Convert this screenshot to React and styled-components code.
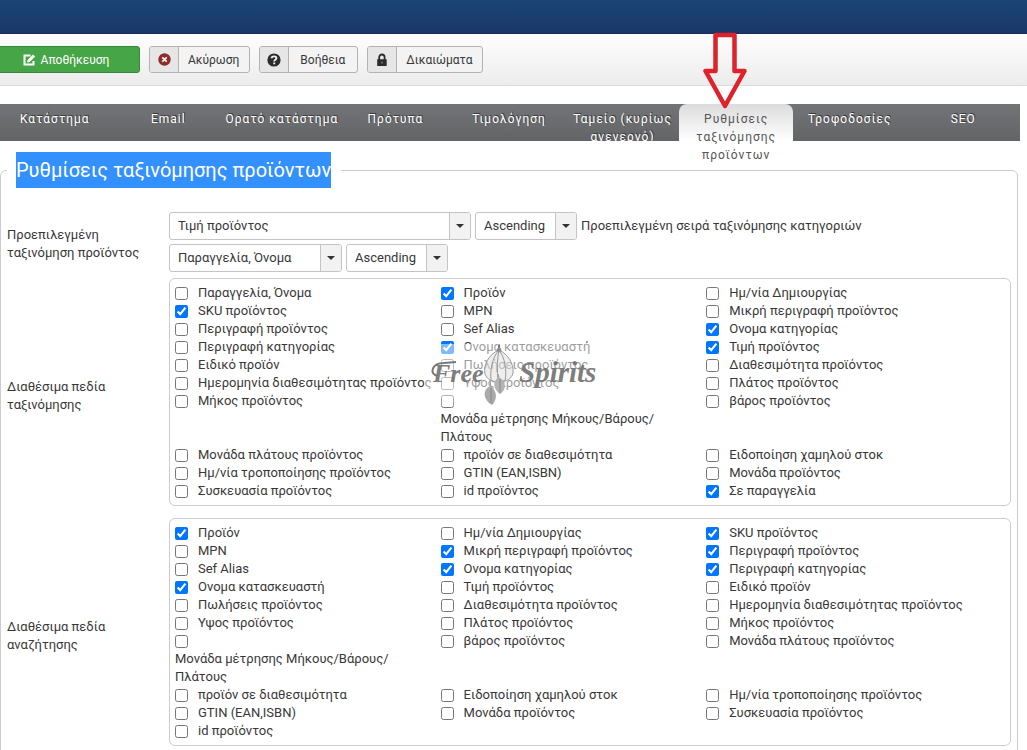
import React from 'react'
import styled, { createGlobalStyle, css } from 'styled-components'

const GlobalStyle = createGlobalStyle`
  * {
    box-sizing: border-box;
  }

  body {
    margin: 0;
    background: #fff;
    color: #383838;
    font: 13px/18px Roboto, "Noto Sans", sans-serif;
    overflow-x: hidden;
  }

  button, select, input {
    font: inherit;
    color: inherit;
  }
`

const Header = styled.header`
  height: 34px;
  background: linear-gradient(180deg, #1a4576 0%, #1a3867 95%, #142c53 100%);
`

const Toolbar = styled.div`
  display: flex;
  gap: 9px;
  padding: 12px 0;
  background: linear-gradient(180deg, #fefefe 0%, #ececec 100%);
  border-bottom: 1px solid #dcdcdc;
  font-size: 12px;
`

const SaveButton = styled.button`
  display: flex;
  align-items: center;
  justify-content: center;
  gap: 5px;
  width: 148px;
  height: 27px;
  margin-left: -8px;
  padding: 0;
  border: 1px solid #37873a;
  border-radius: 3px;
  background: #46a546;
  color: #fff;
`

const ToolButton = styled.button`
  display: flex;
  height: 27px;
  padding: 0;
  overflow: hidden;
  border: 1px solid #b3b3b3;
  border-radius: 3px;
  background: #f3f3f3;
  line-height: 26px;
`

const ToolIcon = styled.span`
  display: flex;
  align-items: center;
  justify-content: center;
  width: 29px;
  height: 25px;
  border-right: 1px solid #b3b3b3;
  background: #e6e6e6;
`

const ToolLabel = styled.span`
  min-width: 68px;
  padding: 0 10px 0 9px;
  text-align: center;
`

const TabBar = styled.nav`
  display: flex;
  height: 37px;
  margin: 18px 7px 0 -2px;
  background: linear-gradient(180deg, #737477 0%, #636466 100%);
  font-size: 12px;
`

const Tab = styled.a`
  position: relative;
  flex: 1 1 0;
  min-width: 0;
  height: 37px;
  padding-top: 6px;
  overflow: hidden;
  color: #fff;
  letter-spacing: 1px;
  text-align: center;
  text-decoration: none;
  text-shadow: 1px -1px 0 #3c3c3c;

  ${({ $active }) => $active && css`
    height: 62px;
    overflow: visible;
    border-radius: 8px 8px 0 0;
    background: linear-gradient(180deg, #dddcdd 0%, #fff 37px);
    color: #555;
    text-shadow: none;
  `}
`

const Pointer = styled.svg`
  position: absolute;
  top: -72px;
  left: 24px;
`

const Panel = styled.fieldset`
  min-width: 0;
  margin: 11px 9px 0 0;
  padding: 24px 6px 10px;
  border: 1px solid #ccc;
  border-radius: 6px;
`

const Legend = styled.legend`
  padding: 0 10px 0 9px;
  font-size: 20px;
  line-height: 36px;
`

const Selection = styled.mark`
  display: block;
  background: #3390ff;
  color: #fff;
`

const Row = styled.div`
  display: grid;
  grid-template-columns: 162px minmax(0, 1fr);
  align-items: center;
`

const RowTitle = styled.div`
  padding-right: 20px;
`

const Sorting = styled.div`
  display: flex;
  flex-direction: column;
  gap: 4px;
  padding-bottom: 4px;
`

const SortLine = styled.div`
  display: flex;
  align-items: center;
  gap: 4px;
`

const SelectBox = styled.div`
  position: relative;
  width: ${({ $width }) => $width}px;
`

const Select = styled.select`
  display: block;
  width: 100%;
  height: 28px;
  padding: 0 28px 0 8px;
  appearance: none;
  border: 1px solid #c4c4c4;
  border-radius: 3px;
  background: #fff;
`

const SelectArrow = styled.span`
  position: absolute;
  top: 1px;
  right: 1px;
  bottom: 1px;
  display: flex;
  align-items: center;
  justify-content: center;
  width: 21px;
  border-left: 1px solid #c4c4c4;
  border-radius: 0 2px 2px 0;
  background: #f2f2f2;
  pointer-events: none;
`

const Group = styled.div`
  position: relative;
  display: grid;
  grid-template-columns: repeat(3, 32%);
  margin: 2px 0 10px;
  padding: 5px;
  border: 1px solid #ccc;
  border-radius: 6px;
`

const Option = styled.label`
  display: flex;
  flex-direction: ${({ $stacked }) => ($stacked ? 'column' : 'row')};
  column-gap: 10px;
  white-space: ${({ $stacked }) => ($stacked ? 'normal' : 'nowrap')};
`

const Checkbox = styled.input`
  flex: none;
  width: 13px;
  height: 13px;
  margin: 3px 0 2px;
`

const OptionText = styled.span`
  max-width: ${({ $stacked }) => ($stacked ? '230px' : 'none')};
`

const Watermark = styled.div`
  position: absolute;
  top: 65px;
  left: 254px;
  width: 178px;
  height: 62px;
  background: linear-gradient(180deg, rgba(255, 255, 255, 0.5) 48px, rgba(255, 255, 255, 0.2) 100%);
  pointer-events: none;
`

const tabs = [
  'Κατάστημα',
  'Email',
  'Ορατό κατάστημα',
  'Πρότυπα',
  'Τιμολόγηση',
  'Ταμείο (κυρίως ανενεργό)',
  'Ρυθμίσεις ταξινόμησης προϊόντων',
  'Τροφοδοσίες',
  'SEO',
]

const units = 'Μονάδα μέτρησης Μήκους/Βάρους/Πλάτους'

const sortFields = [
  ['Παραγγελία, Όνομα'],
  ['Προϊόν', true],
  ['Ημ/νία Δημιουργίας'],
  ['SKU προϊόντος', true],
  ['MPN'],
  ['Μικρή περιγραφή προϊόντος'],
  ['Περιγραφή προϊόντος'],
  ['Sef Alias'],
  ['Ονομα κατηγορίας', true],
  ['Περιγραφή κατηγορίας'],
  ['Ονομα κατασκευαστή', true],
  ['Τιμή προϊόντος', true],
  ['Ειδικό προϊόν'],
  ['Πωλήσεις προϊόντος'],
  ['Διαθεσιμότητα προϊόντος'],
  ['Ημερομηνία διαθεσιμότητας προϊόντος'],
  ['Υψος προϊόντος'],
  ['Πλάτος προϊόντος'],
  ['Μήκος προϊόντος'],
  [units],
  ['βάρος προϊόντος'],
  ['Μονάδα πλάτους προϊόντος'],
  ['προϊόν σε διαθεσιμότητα'],
  ['Ειδοποίηση χαμηλού στοκ'],
  ['Ημ/νία τροποποίησης προϊόντος'],
  ['GTIN (EAN,ISBN)'],
  ['Μονάδα προϊόντος'],
  ['Συσκευασία προϊόντος'],
  ['id προϊόντος'],
  ['Σε παραγγελία', true],
]

const searchFields = [
  ['Προϊόν', true],
  ['Ημ/νία Δημιουργίας'],
  ['SKU προϊόντος', true],
  ['MPN'],
  ['Μικρή περιγραφή προϊόντος', true],
  ['Περιγραφή προϊόντος', true],
  ['Sef Alias'],
  ['Ονομα κατηγορίας', true],
  ['Περιγραφή κατηγορίας', true],
  ['Ονομα κατασκευαστή', true],
  ['Τιμή προϊόντος'],
  ['Ειδικό προϊόν'],
  ['Πωλήσεις προϊόντος'],
  ['Διαθεσιμότητα προϊόντος'],
  ['Ημερομηνία διαθεσιμότητας προϊόντος'],
  ['Υψος προϊόντος'],
  ['Πλάτος προϊόντος'],
  ['Μήκος προϊόντος'],
  [units],
  ['βάρος προϊόντος'],
  ['Μονάδα πλάτους προϊόντος'],
  ['προϊόν σε διαθεσιμότητα'],
  ['Ειδοποίηση χαμηλού στοκ'],
  ['Ημ/νία τροποποίησης προϊόντος'],
  ['GTIN (EAN,ISBN)'],
  ['Μονάδα προϊόντος'],
  ['Συσκευασία προϊόντος'],
  ['id προϊόντος'],
]

const EditIcon = () => (
  <svg width="13" height="12" viewBox="0 0 13 12">
    <path d="M7.5 1.5H1.5v9h9V7" fill="none" stroke="#fff" strokeWidth="2" />
    <path d="M4 8.5l.6-2.6L10 .6l2.2 2L6.7 8z" fill="#fff" />
  </svg>
)

const CancelIcon = () => (
  <svg width="13" height="13" viewBox="0 0 13 13">
    <circle cx="6.5" cy="6.5" r="6.2" fill="#8c2f2b" />
    <path d="M4.3 4.3l4.4 4.4M8.7 4.3L4.3 8.7" stroke="#eee" strokeWidth="1.8" />
  </svg>
)

const HelpIcon = () => (
  <svg width="14" height="14" viewBox="0 0 14 14">
    <circle cx="7" cy="7" r="6.6" fill="#2c2c2c" />
    <path d="M4.6 5.2C4.7 2.7 9.4 2.7 9.4 5.2 9.4 6.7 7.2 6.7 7.2 8.4" fill="none" stroke="#eee" strokeWidth="1.9" />
    <path d="M6.2 9.4h2v1.8h-2z" fill="#eee" />
  </svg>
)

const LockIcon = () => (
  <svg width="12" height="14" viewBox="0 0 12 14">
    <path d="M3.2 7V4.2a2.7 2.7 0 0 1 5.4 0V7" fill="none" stroke="#2c2c2c" strokeWidth="1.8" />
    <path d="M1.2 6.3h9.5V13H1.2z" fill="#2c2c2c" />
    <path d="M5.5 8.8h1v1.6h-1z" fill="#aaa" />
  </svg>
)

const Logo = () => (
  <svg width="178" height="62" viewBox="0 0 178 62">
    <g fill="#6c6c6c" fillOpacity=".9" fontFamily="Liberation Serif, serif" fontWeight="bold" fontStyle="italic">
      <text x="9" y="38" fontSize="26">Free</text>
      <text x="95" y="38" fontSize="29">Spirits</text>
    </g>
    <path d="M14 32C5 31 7 19 20 19l12-1" fill="none" stroke="#777" strokeWidth="2" />
    <g fill="none" stroke="#999" strokeWidth="1">
      <path d="M75 6C65 10 59 21 61 30c2 5 6 8 14 8s13-4 14-9C90 20 84 10 75 6z" fill="#ddd" fillOpacity=".5" />
      <path d="M75 6c-7 8-9 20-8 30M75 6c-2 9-2 20-1 32M75 6c6 8 8 20 6 31M66 36l1 8M74 30l2 8" />
      <path d="M75 1v5" stroke="#777" strokeWidth="2" />
      <circle cx="75" cy="6" r="2" fill="#888" />
    </g>
    <g fill="#aaa">
      <path d="M66 42c-8 4-7 14 2 19 6-6 5-15-2-19z" />
      <path d="M75 33c-7 4-6 12 1 17 7-4 6-13-1-17z" fill="#b4b4b4" />
      <path d="M67 44v15M76 35v14" stroke="#888" />
    </g>
  </svg>
)

const Dropdown = ({ label, value, width }) => (
  <SelectBox $width={width}>
    <Select aria-label={label} defaultValue={value}>
      <option>{value}</option>
    </Select>
    <SelectArrow>
      <svg width="8" height="4" viewBox="0 0 8 4">
        <path d="M0 0h8L4 4z" fill="#333" />
      </svg>
    </SelectArrow>
  </SelectBox>
)

const FieldGroup = ({ label, fields, children }) => (
  <Row>
    <RowTitle>{label}</RowTitle>
    <Group role="group" aria-label={label}>
      {fields.map(([name, checked]) => (
        <Option key={name} $stacked={name === units}>
          <Checkbox type="checkbox" defaultChecked={checked} />
          <OptionText $stacked={name === units}>{name}</OptionText>
        </Option>
      ))}
      {children}
    </Group>
  </Row>
)

const App = () => (
  <>
    <GlobalStyle />
    <Header />

    <Toolbar>
      <SaveButton type="button"><EditIcon /> Αποθήκευση</SaveButton>
      <ToolButton type="button">
        <ToolIcon><CancelIcon /></ToolIcon>
        <ToolLabel>Ακύρωση</ToolLabel>
      </ToolButton>
      <ToolButton type="button">
        <ToolIcon><HelpIcon /></ToolIcon>
        <ToolLabel>Βοήθεια</ToolLabel>
      </ToolButton>
      <ToolButton type="button">
        <ToolIcon><LockIcon /></ToolIcon>
        <ToolLabel>Δικαιώματα</ToolLabel>
      </ToolButton>
    </Toolbar>

    <TabBar>
      {tabs.map((tab, i) => (
        <Tab key={tab} href="#" $active={i === 6}>
          {tab}
          {i === 6 && (
            <Pointer width="44" height="78" viewBox="0 0 44 78">
              <path
                d="M12.5 3H31.5V39H41.5L22 74 2.5 39H12.5z"
                fill="none"
                stroke="#dd222b"
                strokeWidth="4.5"
                strokeLinejoin="round"
              />
            </Pointer>
          )}
        </Tab>
      ))}
    </TabBar>

    <Panel>
      <Legend><Selection>Ρυθμίσεις ταξινόμησης προϊόντων</Selection></Legend>

      <Row>
        <RowTitle>Προεπιλεγμένη ταξινόμηση προϊόντος</RowTitle>
        <Sorting>
          <SortLine>
            <Dropdown label="Ταξινόμηση προϊόντος" value="Τιμή προϊόντος" width={302} />
            <Dropdown label="Σειρά προϊόντος" value="Ascending" width={102} />
            <span>Προεπιλεγμένη σειρά ταξινόμησης κατηγοριών</span>
          </SortLine>
          <SortLine>
            <Dropdown label="Ταξινόμηση κατηγοριών" value="Παραγγελία, Όνομα" width={173} />
            <Dropdown label="Σειρά κατηγοριών" value="Ascending" width={102} />
          </SortLine>
        </Sorting>
      </Row>

      <FieldGroup label="Διαθέσιμα πεδία ταξινόμησης" fields={sortFields}>
        <Watermark><Logo /></Watermark>
      </FieldGroup>
      <FieldGroup label="Διαθέσιμα πεδία αναζήτησης" fields={searchFields} />
    </Panel>
  </>
)

export default App
